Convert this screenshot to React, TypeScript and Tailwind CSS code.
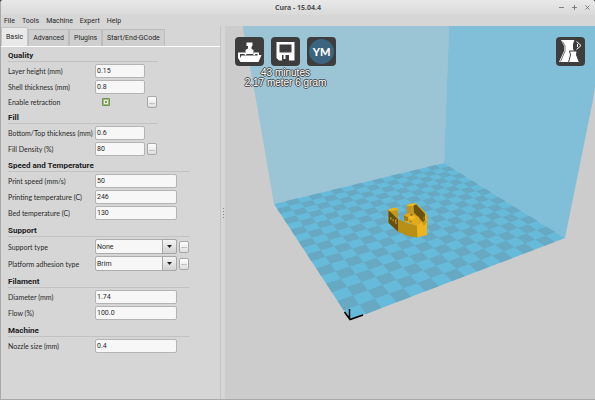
import { Minus, Plus, X } from "lucide-react";
import { ReactNode, useState } from "react";

type Point = [number, number];

const MENUS = ["File", "Tools", "Machine", "Expert", "Help"];
const TABS = ["Basic", "Advanced", "Plugins", "Start/End-GCode"];

// Build plate corners on screen: front, right, back, left
const PLATE: Point[] = [
  [350, 320],
  [565, 238],
  [444, 163],
  [274, 204],
];
const CELLS = 17;

// Perspective mapping from the unit square to the plate
const project = (u: number, v: number): Point => {
  const [[x0, y0], [x1, y1], [x2, y2], [x3, y3]] = PLATE;
  const dx1 = x1 - x2;
  const dx2 = x3 - x2;
  const dx3 = x0 - x1 + x2 - x3;
  const dy1 = y1 - y2;
  const dy2 = y3 - y2;
  const dy3 = y0 - y1 + y2 - y3;
  const det = dx1 * dy2 - dx2 * dy1;
  const g = (dx3 * dy2 - dx2 * dy3) / det;
  const h = (dx1 * dy3 - dx3 * dy1) / det;
  const w = g * u + h * v + 1;
  return [
    ((x1 - x0 + g * x1) * u + (x3 - x0 + h * x3) * v + x0) / w,
    ((y1 - y0 + g * y1) * u + (y3 - y0 + h * y3) * v + y0) / w,
  ];
};

const darkCells = () => {
  let d = "";
  for (let i = 0; i < CELLS; i++) {
    for (let j = 0; j < CELLS; j++) {
      if ((i + j) % 2 === 0) continue;
      const corners = [
        project(i / CELLS, j / CELLS),
        project((i + 1) / CELLS, j / CELLS),
        project((i + 1) / CELLS, (j + 1) / CELLS),
        project(i / CELLS, (j + 1) / CELLS),
      ];
      d += `M${corners.map(([x, y]) => `${x.toFixed(2)} ${y.toFixed(2)}`).join("L")}Z`;
    }
  }
  return d;
};

const Scene = () => (
  <svg
    className="absolute inset-0 h-full w-full"
    viewBox="225 26 370 373"
    preserveAspectRatio="xMidYMin slice"
    aria-hidden="true"
  >
    <path d="M242.500 26L256 100L274 204L444 163L449 26Z" fill="#9bc4d4" />
    <path d="M449 26L444 163L565 238L593 100L600 50V26Z" fill="#81bfd8" />
    <path d="M350 320L565 238L444 163L274 204Z" fill="#66bada" />
    <path d={darkCells()} fill="#67a9c3" />
    {/* Origin marker */}
    <path
      d="M344.500 312L350 319.500L363 315M349.500 309V319"
      fill="none"
      stroke="#000"
      strokeWidth="1.500"
    />
    {/* Boat */}
    <path d="M388.500 209.500L397.500 208V212L398 219L408 223.500L417.500 226L417.500 237.500L408 236L398 231.500L388.500 222Z" fill="#b98f16" />
    <path d="M388.500 210L398 219V231.500L388.500 223Z" fill="#66500f" />
    <path d="M388.500 209.500L393.500 207.500L398 208.500L398 210.500L393 211.500L388.500 211Z" fill="#e9b21d" />
    <path d="M390 211.500L398 210V219Z" fill="#c4981a" />
    <path d="M390 217.500h1.500v2h-1.500ZM392.500 219h1v2.500h-1ZM395 219.500h2v1h-1v2h1v1h-2Z" fill="#c79a18" />
    <path d="M407 205L411 203.500H416L426 213.500L427.500 226L417.500 226.500L404 221V215L407 214Z" fill="#c99b1a" />
    <path d="M407 205L411 203.500H416V206H412L407 207Z" fill="#efb820" />
    <path d="M407 206L411 206V214.500L407 213Z" fill="#c1951b" />
    <path d="M413.500 205.500L416 204.500L425 213L426 219L423 222L414 212.500Z" fill="#6b530f" />
    <path d="M404 215.500L409 213L419 217L420 222L417 226L404 221Z" fill="#e0aa1d" />
    <path d="M404 215.500L408 217V221L404 220.500Z" fill="#9f7b15" />
    <path d="M408 217.500L412 215L416 218L412 220Z" fill="#f3bc22" />
    <path d="M410 214.500l2 -1l1 1.500l-2 1ZM409 220.500l3 1l-1 1ZM423 217l2 -1v3l-2 1Z" fill="#8b6b13" />
    <path d="M417 226L421 221.500L424 225.500L427 222V235L417.500 237.500Z" fill="#edb41d" />
    <path d="M416 203.500L426 213L427.500 217V222L425 220V214Z" fill="#e2ac1d" />
  </svg>
);

const Group = ({
  title,
  wide,
  children,
}: {
  title: string;
  wide?: boolean;
  children: ReactNode;
}) => (
  <section className={wide ? "mb-1 w-[182px]" : "mb-[3px] w-[150px]"}>
    <h2 className="mb-px h-3 border-b border-[#c2c2c2] text-[8px] leading-[12px] font-bold text-[#1c1c1c]">
      {title}
    </h2>
    {children}
  </section>
);

const More = ({ label }: { label: string }) => (
  <button
    aria-label={`${label} settings`}
    className="ml-[2px] flex h-3 w-[10px] shrink-0 items-center justify-center rounded-[2px] border border-[#a8a8a8] bg-linear-to-b from-white to-[#dedede] text-[7px] leading-none text-[#555]"
  >
    ...
  </button>
);

const Field = ({
  id,
  label,
  value,
  wide,
  more,
}: {
  id: string;
  label: string;
  value: string;
  wide?: boolean;
  more?: boolean;
}) => (
  <div className="flex h-4 items-center">
    <label htmlFor={id} className="w-[87px] shrink-0 font-[Lato,sans-serif] whitespace-nowrap">
      {label}
    </label>
    <input
      id={id}
      defaultValue={value}
      className={`h-[14px] rounded-[2px] border border-[#b4b4b4] bg-[#f7f7f7] px-px outline-none ${
        wide ? "w-[82px]" : "w-[50px]"
      }`}
    />
    {more && <More label={label} />}
  </div>
);

const Choice = ({
  id,
  label,
  options,
}: {
  id: string;
  label: string;
  options: string[];
}) => (
  <div className="flex h-[17px] items-center">
    <label htmlFor={id} className="w-[87px] shrink-0 font-[Lato,sans-serif] whitespace-nowrap">
      {label}
    </label>
    <div className="relative h-[15px] w-[82px] shrink-0">
      <select
        id={id}
        className="h-full w-full appearance-none rounded-[2px] border border-[#adadad] bg-[#f7f7f7] px-px outline-none"
      >
        {options.map((option) => (
          <option key={option}>{option}</option>
        ))}
      </select>
      <span className="pointer-events-none absolute inset-y-0 right-0 flex w-[15px] items-center justify-center rounded-r-[2px] border border-[#a6a6a6] bg-linear-to-b from-[#f4f4f4] to-[#d2d2d2]">
        <svg className="h-[3px] w-[5px]" viewBox="0 0 5 3">
          <path d="M0 0H5L2.500 3Z" fill="#222" />
        </svg>
      </span>
    </div>
    <More label={label} />
  </div>
);

const ToolButton = ({ label, children }: { label: string; children: ReactNode }) => (
  <button
    aria-label={label}
    className="flex size-[29px] items-center justify-center rounded-[4px] bg-[#3d3d3d]"
  >
    <svg viewBox="0 0 29 29" className="size-full">
      {children}
    </svg>
  </button>
);

const App = () => {
  const [tab, setTab] = useState("Basic");

  return (
    <div className="bg-[#333]">
      <div className="flex min-h-screen flex-col rounded-t-[3px] border-b border-l border-[#a9a9a9] bg-[#d6d6d6] font-[Roboto,sans-serif] text-[7px] leading-[10px] text-[#282828]">
        <header className="flex h-[15px] items-center rounded-t-[3px] bg-linear-to-b from-[#e9e9e9] to-[#d9d9d9] px-1 text-[#707070]">
          <div className="flex-1" />
          <h1 className="font-['Noto_Sans',sans-serif] text-[7px] font-bold text-[#505050]">
            Cura - 15.04.4
          </h1>
          <div className="flex flex-1 justify-end gap-[6px]">
            <button aria-label="Minimize">
              <Minus size={7} strokeWidth={3} />
            </button>
            <button aria-label="Maximize">
              <Plus size={7} strokeWidth={3} />
            </button>
            <button aria-label="Close">
              <X size={7} strokeWidth={3} />
            </button>
          </div>
        </header>

        <nav className="flex h-[11px] items-center gap-[7px] px-[3px]">
          {MENUS.map((menu) => (
            <button key={menu}>{menu}</button>
          ))}
        </nav>

        <main className="flex flex-1">
          <aside className="w-[220px] shrink-0 border-r border-[#c4c4c4]">
            <div role="tablist" className="flex items-end border-b border-white pt-px">
              {TABS.map((name) => (
                <button
                  key={name}
                  role="tab"
                  aria-selected={tab === name}
                  onClick={() => setTab(name)}
                  className={`border border-b-0 px-1 ${
                    tab === name
                      ? "h-[19px] border-[#c4c4c4] bg-[#e9e9e9]"
                      : "h-[17px] border-[#bcbcbc] bg-[#cfcfcf]"
                  }`}
                >
                  {name}
                </button>
              ))}
            </div>

            <form className="pt-[3px] pl-[7px]">
              <Group title="Quality">
                <Field id="layer" label="Layer height (mm)" value="0.15" />
                <Field id="shell" label="Shell thickness (mm)" value="0.8" />
                <div className="flex h-[14px] items-center">
                  <label htmlFor="retraction" className="w-[94px] shrink-0 font-[Lato,sans-serif]">
                    Enable retraction
                  </label>
                  <div className="relative size-2">
                    <input
                      id="retraction"
                      type="checkbox"
                      defaultChecked
                      className="peer block size-2 appearance-none rounded-[1px] border border-[#6f8f55] bg-[#9dbb83]"
                    />
                    <svg
                      viewBox="0 0 8 8"
                      className="pointer-events-none absolute inset-0 hidden peer-checked:block"
                    >
                      <path d="M2 2H6V6H2Z" fill="#e4eedb" />
                      <path d="M3 3H5V5H3Z" fill="#7d9c63" />
                    </svg>
                  </div>
                  <div className="mr-px ml-auto">
                    <More label="Retraction" />
                  </div>
                </div>
              </Group>

              <Group title="Fill">
                <Field id="bottom" label="Bottom/Top thickness (mm)" value="0.6" />
                <Field id="density" label="Fill Density (%)" value="80" more />
              </Group>

              <Group title="Speed and Temperature" wide>
                <Field id="speed" label="Print speed (mm/s)" value="50" wide />
                <Field id="nozzle-temp" label="Printing temperature (C)" value="246" wide />
                <Field id="bed-temp" label="Bed temperature (C)" value="130" wide />
              </Group>

              <Group title="Support" wide>
                <Choice
                  id="support"
                  label="Support type"
                  options={["None", "Touching buildplate", "Everywhere"]}
                />
                <Choice
                  id="adhesion"
                  label="Platform adhesion type"
                  options={["Brim", "Raft", "None"]}
                />
              </Group>

              <Group title="Filament" wide>
                <Field id="diameter" label="Diameter (mm)" value="1.74" wide />
                <Field id="flow" label="Flow (%)" value="100.0" wide />
              </Group>

              <Group title="Machine" wide>
                <Field id="nozzle" label="Nozzle size (mm)" value="0.4" wide />
              </Group>
            </form>
          </aside>

          {/* Splitter */}
          <div className="flex w-1 shrink-0 flex-col items-center justify-center gap-[2px] bg-[#d6d6d6]">
            {[0, 1, 2, 3].map((dot) => (
              <span key={dot} className="size-px bg-[#888]" />
            ))}
          </div>

          <section className="relative flex-1 overflow-hidden bg-[#ccc]">
            <Scene />
            <div className="relative flex items-start justify-between pt-[11px] pr-[10px] pl-[10px]">
              <div className="flex flex-col items-center">
                <div className="flex gap-[7px]">
                  <ToolButton label="Load model">
                    <path d="M3 15.500H10.500L11.500 18H18L19 15.500H24V18H26.500L23.500 25H5.500L3 21Z" fill="#fff" />
                    <path d="M5 17H9.500L10.500 19H19.500L20.500 17H22.500V18.500H6.500L5 21Z" fill="#3d3d3d" />
                    <path d="M11.500 5.500H17.500V8.500L16.500 10V12L18.500 13V17H10.500V13L13 11.500V9H11.500Z" fill="#fff" />
                  </ToolButton>
                  <ToolButton label="Save toolpath">
                    <path
                      d="M5.500 5H23.500V23.500H8L5.500 21Z M8.500 7.500V15.500H20.500V7.500Z M11 18V23.500H18V18Z"
                      fill="#fff"
                      fillRule="evenodd"
                    />
                    <path d="M12.500 18H14.500V22H12.500Z" fill="#fff" />
                  </ToolButton>
                  <ToolButton label="Share on YouMagine">
                    <circle cx="14.500" cy="14.500" r="12.500" fill="#3b647f" />
                    <text
                      x="14.500"
                      y="18.500"
                      textAnchor="middle"
                      fill="#fff"
                      className="font-[Lato,sans-serif] text-[11px] font-black"
                    >
                      YM
                    </text>
                  </ToolButton>
                </div>
                <p className="mt-[2px] text-center font-['Liberation_Sans',sans-serif] text-[10px] leading-[10px] whitespace-nowrap text-white [text-shadow:1px_0_#444,-1px_0_#444,0_1px_#444,0_-1px_#444]">
                  43 minutes
                  <br />
                  2.17 meter 6 gram
                </p>
              </div>

              <ToolButton label="View mode">
                <path d="M5 3H18.500L17 7V12L19 16V25H3L8 14V9Z" fill="#fff" />
                <path d="M6.500 4.500L9 9V14L4.500 24.500" fill="none" stroke="#3d3d3d" strokeWidth=".7" />
                <path d="M13.500 14H21L20.500 18L23.500 25.500H12.500L14.500 18Z" fill="#fff" stroke="#3d3d3d" />
                <path d="M20.500 4.500L25 8.500L20.500 12.500M21.500 7V10" fill="none" stroke="#fff" />
              </ToolButton>
            </div>
          </section>
        </main>
      </div>
    </div>
  );
};

export default App;
